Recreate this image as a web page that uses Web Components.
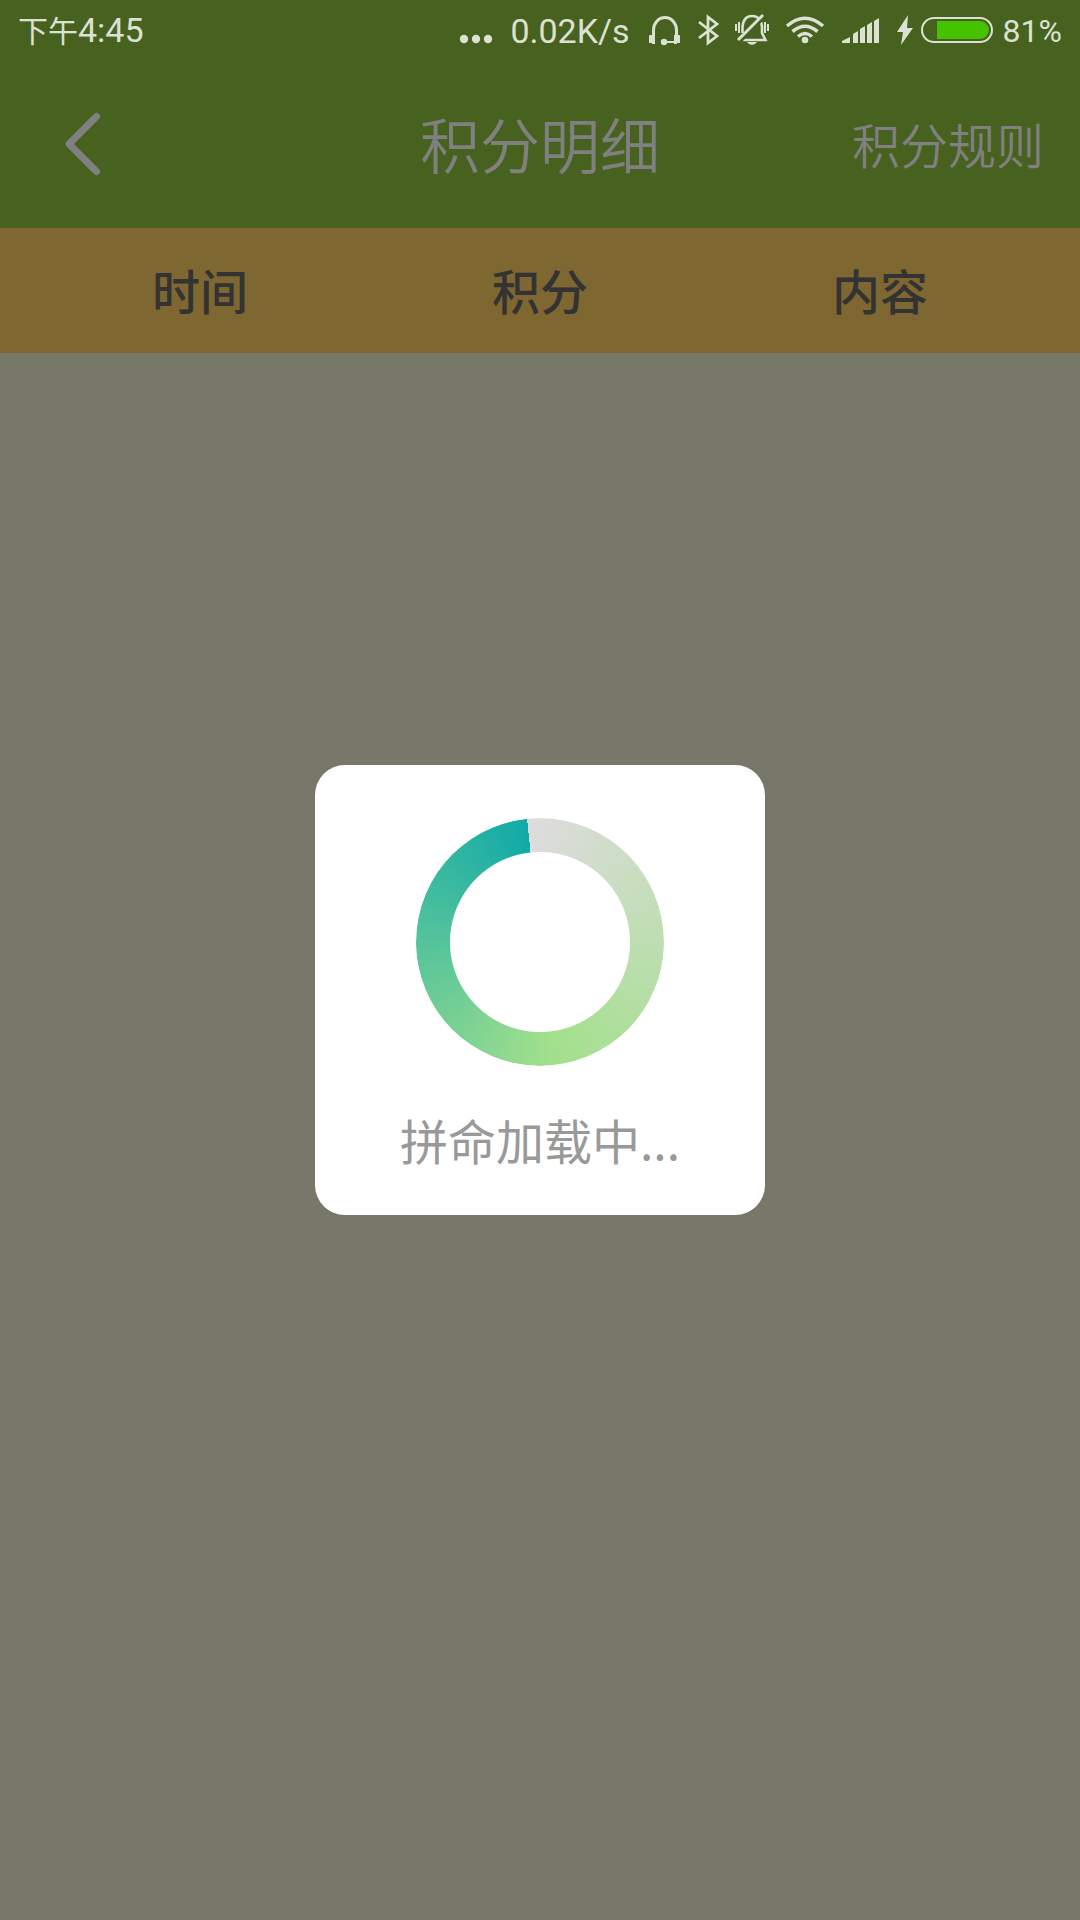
<!DOCTYPE html>
<html lang="zh-CN">
<head>
<meta charset="utf-8">
<meta name="viewport" content="width=device-width, initial-scale=1">
<title>积分明细</title>
<style>
  html, body { height: 100%; }
  body { margin: 0; background: #77776a; font-family: "Noto Sans CJK SC", sans-serif; }
</style>
</head>
<body>
<points-page></points-page>

<script>
const define = (name, html) => {
  const template = document.createElement('template');
  template.innerHTML = html;
  customElements.define(name, class extends HTMLElement {
    constructor() {
      super();
      this.attachShadow({ mode: 'open' }).append(template.content.cloneNode(true));
    }
  });
};

define('status-bar', `
<style>
  :host { display: flex; justify-content: space-between; align-items: center; height: 62px; padding: 0 18px;
    box-sizing: border-box; color: #dbe2d3; font: 34px/62px Roboto, "Noto Sans CJK SC", sans-serif; white-space: nowrap; }
  .right { display: flex; align-items: center; }
  small { font-size: 30px; }
  .battery { font-size: 32px; }
  svg { display: block; flex: none; fill: currentColor; }
  .line { fill: none; stroke: currentColor; }
  .gap { fill: none; stroke: #47611f; }
</style>
<span><small>下午</small>4:45</span>
<div class="right">
  <svg width="52" height="62" viewBox="460 0 52 62"><circle cx="466" cy="39" r="4.2"/><circle cx="478" cy="39" r="4.2"/><circle cx="490" cy="39" r="4.2"/></svg>
  <span>0.02K/s</span>
  <svg width="291" height="62" viewBox="630 0 291 62">
    <g>
      <path class="line" stroke-width="3" d="M653.500 43V30a11.500 12.500 0 0 1 23 0V43"/>
      <path d="M649 36q0-1 1-1h5v9h-3v-1h-3zM680 36q0-1-1-1h-5v9h3v-1h3z"/>
      <circle cx="664" cy="42" r="3.200"/><path d="M664 41h12v2h-12z"/>
    </g>
    <path class="line" stroke-width="2.800" d="M699 22l18 14-9 7V17l9 7-18 14"/>
    <g>
      <path class="line" stroke-width="2.600" d="M742.500 33v-6q1-11 9.500-11 9 0 10 11v6l3.500 7h-24"/>
      <path class="gap" stroke-width="4" d="M739 42l27-27"/>
      <path class="line" stroke-width="3" d="M738 40l25-25"/>
      <path d="M747 42h10q-2 3-5 3t-5-3z"/>
      <path class="line" stroke-width="2" d="M736 24v7M739 22v11M768 24v7M765 22v11"/>
    </g>
    <g>
      <path class="line" stroke-width="3.600" d="M787 26q18-15.500 36 0M792.500 31.500q12.500-10.500 25 0M798 36.500q7-6 14 0"/>
      <circle cx="805" cy="40" r="3.300"/>
    </g>
    <path d="M842 43v-2l8-4v6zM853 34l5-3v12h-5zM860 29l5-3v17h-5zM867 25l5-3v21h-5zM874 21l5-3v25h-5z"/>
    <path d="M908 15l-11 17h6l-2 13 12-17h-6z"/>
  </svg>
  <svg width="82" height="62" viewBox="921 0 82 62">
    <rect class="line" x="922" y="18" width="70" height="24" rx="12" stroke-width="2"/>
    <path fill="#46c300" d="M937 21h43a9 9 0 0 1 0 18h-43z"/>
  </svg>
  <span class="battery">81%</span>
</div>`);

define('nav-bar', `
<style>
  :host { display: grid; grid-template-columns: 1fr auto 1fr; align-items: center; height: 166px; padding: 0 36px; box-sizing: border-box; color: #808080; }
  button, a, h1 { margin: 0; padding: 0; border: 0; background: none; color: inherit; font-family: inherit; font-weight: 350; }
  h1, a { padding-bottom: 4px; }
  button { justify-self: start; width: 92px; height: 92px; }
  svg { display: block; fill: none; stroke: currentColor; stroke-width: 7; stroke-linecap: round; stroke-linejoin: round; }
  h1 { font-size: 60px; line-height: 88px; }
  a { justify-self: end; font-size: 48px; line-height: 70px; text-decoration: none; }
</style>
<button type="button" aria-label="返回"><svg width="92" height="92" viewBox="0 0 92 92"><path d="M60.500 17.500 33 45l27.500 27.500"/></svg></button>
<h1><slot></slot></h1>
<a href="#rules"><slot name="action"></slot></a>`);

define('points-table', `
<style>
  :host { display: block; background: #7e6731; padding: 0 30px; }
  table { width: 100%; border-collapse: collapse; table-layout: fixed; }
  th { height: 121px; padding: 0 0 4px; color: #333; font-size: 48px; line-height: 70px; font-weight: 500; }
</style>
<table><thead><tr><th scope="col">时间</th><th scope="col">积分</th><th scope="col">内容</th></tr></thead></table>`);

define('loading-dialog', `
<style>
  :host { position: fixed; inset: 60px 0 0; display: flex; align-items: center; justify-content: center; }
  .card { display: flex; flex-direction: column; align-items: center; gap: 38px; width: 450px; padding: 53px 0 41px; box-sizing: border-box;
    border-radius: 30px; background: #fff; color: #999; font-size: 48px; line-height: 70px; }
  .ring { width: 248px; height: 248px; border-radius: 50%;
    background: conic-gradient(from -6deg, #dedcdd 0deg, #a2e08c 180deg, #11aaa8 360deg);
    mask: radial-gradient(circle, transparent 89.500px, #000 90.500px); }
</style>
<div class="card" role="status"><div class="ring"></div><slot></slot></div>`);

define('points-page', `
<style>
  :host { display: block; }
  header { background: #47611f; }
</style>
<header><status-bar></status-bar><nav-bar>积分明细<span slot="action">积分规则</span></nav-bar></header>
<main><points-table></points-table></main>
<loading-dialog>拼命加载中...</loading-dialog>`);
</script>
</body>
</html>
